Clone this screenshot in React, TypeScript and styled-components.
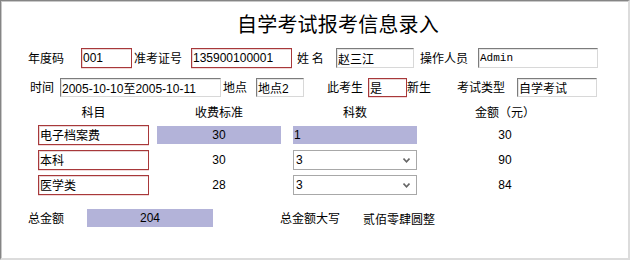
import React from 'react';
import styled, { createGlobalStyle } from 'styled-components';

const GlobalStyle = createGlobalStyle`
  body {
    margin: 0;
    background: #fff;
    font-family: "Liberation Sans", "Noto Sans CJK SC", sans-serif;
    font-size: 12px;
    color: #000;
  }
`;

const Frame = styled.div`
  box-sizing: border-box;
  width: 630px;
  height: 260px;
  border-style: solid;
  border-width: 1px 2px 2px 1px;
  border-color: #858585 #dcdcdc #dcdcdc #858585;
  box-shadow: inset 1px 1px 0 #c8c8c8;
  display: flex;
  flex-direction: column;
`;

const Title = styled.h1`
  margin: 10px 0 0;
  padding-left: 47px;
  height: 26px;
  text-align: center;
  font-family: "Noto Sans CJK SC", sans-serif;
  font-size: 20px;
  font-weight: normal;
  line-height: 26px;
  letter-spacing: 0.2px;
`;

const FormRow = styled.div<{ $top: number }>`
  display: flex;
  align-items: center;
  padding-left: 27px;
  margin-top: ${({ $top }) => $top}px;
  height: 20px;
`;

const Label = styled.span<{ $w: number; $ml?: number }>`
  flex: none;
  width: ${({ $w }) => $w}px;
  margin-left: ${({ $ml = 0 }) => $ml}px;
  font-family: "Noto Sans CJK SC", sans-serif;
  font-size: 12px;
  line-height: 20px;
  white-space: pre;
`;

const TextBox = styled.input<{ $w: number; $red?: boolean; $mono?: boolean; $h?: number }>`
  flex: none;
  box-sizing: border-box;
  width: ${({ $w }) => $w}px;
  height: ${({ $h = 20 }) => $h}px;
  margin: 0;
  padding: 0 1px;
  background: #fff;
  color: #000;
  outline: none;
  font-family: ${({ $mono }) =>
    $mono ? '"Liberation Mono", monospace' : '"Liberation Sans", "Noto Sans CJK SC", sans-serif'};
  font-size: ${({ $mono }) => ($mono ? 11 : 12)}px;
  border: 1px solid;
  border-color: ${({ $red }) =>
    $red ? '#a8383a' : '#7c7c7c #d8d8d8 #d8d8d8 #7c7c7c'};
  box-shadow: ${({ $red }) =>
    $red ? 'inset 1px 1px 0 #e9d6d6, 0 1px 0 #f2d8d8' : 'inset 1px 1px 0 #e4e4e4'};
`;

const Table = styled.div`
  display: grid;
  grid-template-columns: 111px 132px 136px 176px;
  padding-left: 37px;
  margin-top: 5px;
  align-items: center;
`;

const HeadCell = styled.div<{ $pl?: number }>`
  box-sizing: border-box;
  height: 20px;
  line-height: 20px;
  padding-left: ${({ $pl = 0 }) => $pl}px;
  text-align: center;
  font-family: "Noto Sans CJK SC", sans-serif;
`;

const Cell = styled.div<{ $pl?: number }>`
  box-sizing: border-box;
  height: 25px;
  display: flex;
  align-items: center;
  justify-content: center;
  padding-left: ${({ $pl = 0 }) => $pl}px;
`;

const Shade = styled.div<{ $w: number; $left?: boolean }>`
  flex: none;
  box-sizing: border-box;
  width: ${({ $w }) => $w}px;
  height: 18px;
  background: #b3b3d9;
  line-height: 18px;
  padding-left: ${({ $left }) => ($left ? 1 : 0)}px;
  text-align: ${({ $left }) => ($left ? 'left' : 'center')};
  font-size: 12px;
`;

const Num = styled.span`
  width: 100%;
  text-align: center;
`;

const SelectWrap = styled.div`
  position: relative;
  box-sizing: border-box;
  width: 124px;
  height: 20px;
`;

const Select = styled.select`
  box-sizing: border-box;
  width: 100%;
  height: 100%;
  margin: 0;
  padding: 0 2px;
  appearance: none;
  background: #fff;
  border: 1px solid #a8a8a8;
  border-radius: 0;
  font-family: "Liberation Sans", sans-serif;
  font-size: 12px;
  color: #000;
  outline: none;
`;

const Chevron = styled.svg`
  position: absolute;
  right: 7px;
  top: 8px;
  pointer-events: none;
`;

const TotalRow = styled.div`
  display: flex;
  align-items: center;
  padding-left: 27px;
  margin-top: 11px;
  height: 20px;
`;

const Amount = styled.span`
  font-family: "Noto Sans CJK SC", sans-serif;
  margin-left: 15px;
`;

const subjects = [
  { name: '电子档案费', fee: 30, count: '1', total: 30, locked: true },
  { name: '本科', fee: 30, count: '3', total: 90, locked: false },
  { name: '医学类', fee: 28, count: '3', total: 84, locked: false },
];

const App: React.FC = () => {
  return (
    <Frame>
      <GlobalStyle />
      <Title>自学考试报考信息录入</Title>

      <FormRow $top={11}>
        <Label $w={53}>年度码</Label>
        <TextBox $w={51} $red defaultValue="001" />
        <Label $w={57} $ml={2}>准考证号</Label>
        <TextBox $w={101} $red defaultValue="135900100001" />
        <Label $w={39} $ml={5}>{'姓 名'}</Label>
        <TextBox $w={78} defaultValue="赵三江" />
        <Label $w={58} $ml={6}>操作人员</Label>
        <TextBox $w={120} $mono defaultValue="Admin" />
      </FormRow>

      <FormRow $top={9}>
        <Label $w={30} $ml={2}>时间</Label>
        <TextBox $w={161} $h={19} defaultValue="2005-10-10至2005-10-11" />
        <Label $w={33} $ml={2}>地点</Label>
        <TextBox $w={48} $h={19} defaultValue="地点2" />
        <Label $w={41} $ml={23}>此考生</Label>
        <TextBox $w={39} $h={19} $red defaultValue="是" />
        <Label $w={50}>新生</Label>
        <Label $w={60}>考试类型</Label>
        <TextBox $w={80} $h={19} defaultValue="自学考试" />
      </FormRow>

      <Table>
        <HeadCell>科目</HeadCell>
        <HeadCell $pl={8}>收费标准</HeadCell>
        <HeadCell $pl={12}>科数</HeadCell>
        <HeadCell>金额（元）</HeadCell>

        {subjects.map((s) => (
          <React.Fragment key={s.name}>
            <Cell>
              <TextBox $w={111} $red defaultValue={s.name} />
            </Cell>
            <Cell $pl={8}>
              {s.locked ? <Shade $w={124}>{s.fee}</Shade> : <Num>{s.fee}</Num>}
            </Cell>
            <Cell $pl={12}>
              {s.locked ? (
                <Shade $w={124} $left>{s.count}</Shade>
              ) : (
                <SelectWrap>
                  <Select defaultValue={s.count}>
                    <option value="1">1</option>
                    <option value="2">2</option>
                    <option value="3">3</option>
                  </Select>
                  <Chevron width="7" height="5" viewBox="0 0 7 5">
                    <path d="M0.5 0.5 L3.5 3.8 L6.5 0.5" fill="none" stroke="#666" strokeWidth="1.6" />
                  </Chevron>
                </SelectWrap>
              )}
            </Cell>
            <Cell>
              <Num>{s.total}</Num>
            </Cell>
          </React.Fragment>
        ))}
      </Table>

      <TotalRow>
        <Label $w={59}>总金额</Label>
        <Shade $w={126}>204</Shade>
        <Label $w={68} $ml={67}>总金额大写</Label>
        <Amount>贰佰零肆圆整</Amount>
      </TotalRow>
    </Frame>
  );
};

export default App;
